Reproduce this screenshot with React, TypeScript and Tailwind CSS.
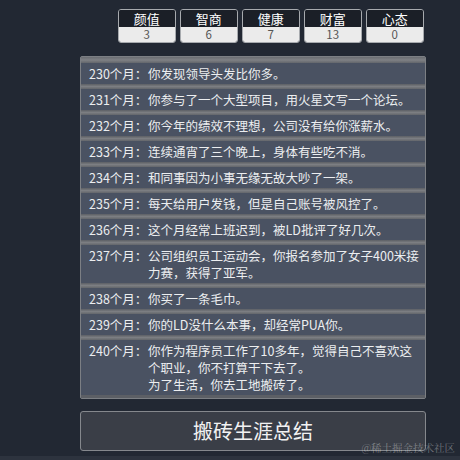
import React from "react";

const stats = [
  { label: "颜值", value: 3 },
  { label: "智商", value: 6 },
  { label: "健康", value: 7 },
  { label: "财富", value: 13 },
  { label: "心态", value: 0 },
];

const logs: { month: number; lines: string[] }[] = [
  { month: 230, lines: ["你发现领导头发比你多。"] },
  { month: 231, lines: ["你参与了一个大型项目，用火星文写一个论坛。"] },
  { month: 232, lines: ["你今年的绩效不理想，公司没有给你涨薪水。"] },
  { month: 233, lines: ["连续通宵了三个晚上，身体有些吃不消。"] },
  { month: 234, lines: ["和同事因为小事无缘无故大吵了一架。"] },
  { month: 235, lines: ["每天给用户发钱，但是自己账号被风控了。"] },
  { month: 236, lines: ["这个月经常上班迟到，被LD批评了好几次。"] },
  { month: 237, lines: ["公司组织员工运动会，你报名参加了女子400米接", "力赛，获得了亚军。"] },
  { month: 238, lines: ["你买了一条毛巾。"] },
  { month: 239, lines: ["你的LD没什么本事，却经常PUA你。"] },
  {
    month: 240,
    lines: ["你作为程序员工作了10多年，觉得自己不喜欢这", "个职业，你不打算干下去了。", "为了生活，你去工地搬砖了。"],
  },
];

function StatBox({ label, value }: { label: string; value: number }) {
  return (
    <div className="w-[58.5px] rounded-[3px] border border-[#a7aaae] overflow-hidden flex flex-col">
      <div className="h-[17px] bg-[#1b1f27] text-white text-[13px] leading-[17px] text-center">
        {label}
      </div>
      <div className="h-[15px] bg-[#ebebeb] text-[#555] text-[11.5px] leading-[15px] text-center">
        {value}
      </div>
    </div>
  );
}

function Separator({ h = 5 }: { h?: number }) {
  return (
    <div
      className={
        h === 5
          ? "h-[5px] bg-linear-to-b from-[#5c5f65] via-[#7c7e82] to-[#63666b]"
          : "h-[6px] bg-linear-to-b from-[#6a6d72] via-[#7f8185] to-[#63666b]"
      }
    />
  );
}

export default function App() {
  return (
    <div
      className="relative w-[460px] h-[460px] bg-[#222833] overflow-hidden"
      style={{ fontFamily: '"Noto Sans CJK SC", "Noto Sans", sans-serif' }}
    >
      <div className="h-[456px] flex flex-col ml-[80px] w-[346px]">
        {/* stats */}
        <div className="mt-[9px] flex justify-end gap-[3.5px] pr-[2px]">
          {stats.map((s) => (
            <StatBox key={s.label} label={s.label} value={s.value} />
          ))}
        </div>

        {/* log panel */}
        <div className="mt-[13px] rounded-[2px] border border-[#7c7f84] bg-[#63666b] flex flex-col">
          <Separator h={6} />
          {logs.map((log, i) => (
            <React.Fragment key={log.month}>
              {i > 0 && <Separator />}
              <div className="bg-[#4a5262] flex pl-[8px] py-[2px] text-[12.5px] leading-[17px] text-[#eceef0]">
                <div className="w-[59px] shrink-0 whitespace-nowrap">{log.month}个月：</div>
                <div className="flex flex-col">
                  {log.lines.map((line) => (
                    <div key={line} className="whitespace-nowrap">
                      {line}
                    </div>
                  ))}
                </div>
              </div>
            </React.Fragment>
          ))}
          <div className="h-[3px] bg-[#5c5f65]" />
        </div>

        {/* summary button */}
        <button className="mt-[12px] h-[40px] rounded-[3px] border border-[#85888d] bg-[#3a3e47] text-[#f2f2f2] text-[20px] leading-[38px] text-center">
          搬砖生涯总结
        </button>
      </div>
      <div className="h-[4px] bg-[#2d333e]" />

      {/* watermark */}
      <div
        className="absolute right-[5px] bottom-[6px] text-[10.5px] leading-[13px] text-white/35 whitespace-nowrap"
        style={{ fontFamily: '"Noto Serif CJK SC", "Noto Sans CJK SC", serif' }}
      >
        @稀土掘金技术社区
      </div>
    </div>
  );
}
